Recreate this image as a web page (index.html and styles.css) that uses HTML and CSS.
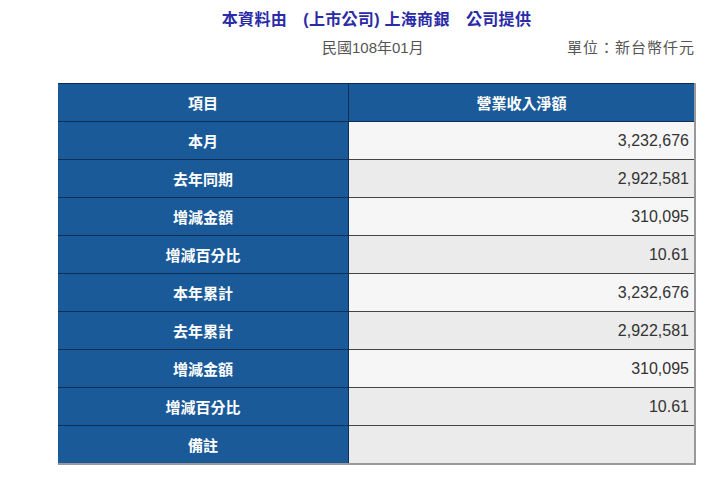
FILE: index.html
```html
<!DOCTYPE html>
<html>
<head>
<meta charset="utf-8">
<link rel="stylesheet" href="styles.css">
</head>
<body>
<div class="page">
  <div class="title">本資料由　(上市公司) 上海商銀　公司提供</div>
  <div class="meta">
    <span class="date">民國108年01月</span>
    <span class="unit">單位：新台幣仟元</span>
  </div>
  <table class="report">
    <tr class="head"><th>項目</th><th>營業收入淨額</th></tr>
    <tr class="odd"><th>本月</th><td>3,232,676</td></tr>
    <tr class="even"><th>去年同期</th><td>2,922,581</td></tr>
    <tr class="odd"><th>增減金額</th><td>310,095</td></tr>
    <tr class="even"><th>增減百分比</th><td>10.61</td></tr>
    <tr class="odd"><th>本年累計</th><td>3,232,676</td></tr>
    <tr class="even"><th>去年累計</th><td>2,922,581</td></tr>
    <tr class="odd"><th>增減金額</th><td>310,095</td></tr>
    <tr class="even"><th>增減百分比</th><td>10.61</td></tr>
    <tr class="even"><th>備註</th><td></td></tr>
  </table>
</div>
</body>
</html>
```
FILE: styles.css
```css
html, body {
  margin: 0;
  padding: 0;
  background: #fff;
}
body {
  font-family: "Liberation Sans", "Noto Sans CJK TC", sans-serif;
}
.page {
  width: 720px;
  padding-top: 9px;
}
.title {
  text-align: center;
  color: #2b2ba8;
  font-weight: bold;
  font-size: 16px;
  line-height: 22px;
  padding-left: 33px;
  letter-spacing: 0.3px;
}
.meta {
  display: flex;
  height: 22px;
  line-height: 22px;
  margin-top: 6px;
  font-size: 15px;
  color: #555;
}
.date {
  margin-left: 322px;
}
.unit {
  margin-left: auto;
  margin-right: 25px;
  letter-spacing: 1px;
}
.report {
  margin-top: 24px;
  margin-left: 58px;
  width: 638px;
  border-collapse: collapse;
  border-right: 2px solid #999;
  border-bottom: 2px solid #999;
}
.report th, .report td {
  height: 37px;
  padding: 0;
  font-size: 15px;
  border-bottom: 1px solid #444;
}
.report th {
  width: 290px;
  background: #1b5a99;
  color: #fff;
  font-family: "Noto Sans CJK TC", sans-serif;
  font-weight: bold;
  text-align: center;
  border-right: 1px solid #0e2f55;
  border-bottom-color: #0e2f55;
}
.report tr.head th {
  border-top: 1px solid #0e2f55;
}
.report tr.head th + th {
  width: auto;
  border-right: none;
}
.report td {
  text-align: right;
  padding-right: 5px;
  color: #333;
  font-size: 16px;
}
.report tr.odd td {
  background: #f6f6f6;
}
.report tr.even td {
  background: #ebebeb;
}
.report tr:last-child th, .report tr:last-child td {
  border-bottom: none;
}
```
